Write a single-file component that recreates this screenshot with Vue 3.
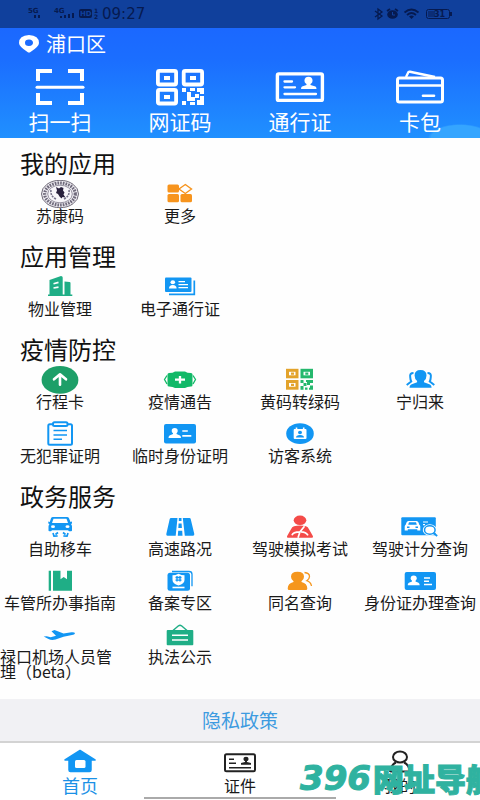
<script setup>
import { ref } from 'vue'

const quick = [
  {
    name: '扫一扫',
    icon: '<g fill="none" stroke="#fff" stroke-width="4"><path d="M8 14V4H22M38 4H52V14M8 26V36H22M38 36H52V26"/><path d="M7 20.300H53" stroke-width="3" stroke-linecap="round"/></g>'
  },
  {
    name: '网证码',
    icon: '<g fill="none" stroke="#fff" stroke-width="3.800"><rect x="7.900" y="3.900" width="18.200" height="13.600" rx="1.500"/><rect x="33.700" y="3.900" width="18.400" height="13.600" rx="1.500"/><rect x="7.900" y="22.900" width="18.200" height="13.600" rx="1.500"/></g><path fill="#fff" d="M14 9h6v4h-6zM40 9h6v4h-6zM14 28h6v4h-6zM32 21h4v4h-4zM37 25h4v5h4v4h-8zM40 21h5v3h-5zM47 21h7v6h-4v-2h-3zM45 27h4v4h-4zM50 29h4v9h-7v-5h3zM32 34h4v4h-4zM40 35h5v3h-5z"/>'
  },
  {
    name: '通行证',
    icon: '<rect x="7.400" y="6.900" width="45" height="26.500" rx="1.500" fill="none" stroke="#fff" stroke-width="3.400"/><path d="M14.500 14.500H22M14.500 20.300H25M14.500 27H46" stroke="#fff" stroke-width="2.300" stroke-linecap="round"/><ellipse cx="38.500" cy="13.500" rx="4" ry="3.800" fill="#fff"/><path fill="#fff" d="M36.500 15h4v3l5 1.500q1 .5 1 2.500H31q0-2 1-2.500l4.500-1.500z"/>'
  },
  {
    name: '卡包',
    icon: '<g fill="none" stroke="#fff" stroke-width="3"><rect x="7.500" y="11" width="45" height="24" rx="2"/><path d="M7 18.500H53" stroke-width="2.600"/><path d="M16 10L18.500 5Q19 4.500 20 4.700L45 10" stroke-width="2.400"/><path d="M33 28.800H44" stroke-width="2.600" stroke-linecap="round"/></g>'
  }
]

const B = '#1296f3'
const G = '#1fae86'

const sections = [
  {
    title: '我的应用',
    items: [
      {
        name: '苏康码',
        icon: '<ellipse cx="20" cy="14" rx="18.500" ry="13.700" fill="#f1eff4" stroke="#706b78" stroke-width="1"/><ellipse cx="20" cy="14" rx="15.300" ry="11" fill="none" stroke="#706b7c" stroke-width="3.200" stroke-dasharray="1.700 1"/><ellipse cx="20" cy="14" rx="12.300" ry="8.800" fill="#f8f6fa" stroke="#7d7889" stroke-width=".8"/><path d="M11 10q-1 6 5 9M29 10q1 6-5 9" fill="none" stroke="#77738a" stroke-width="1.600" stroke-dasharray="2 1"/><path fill="#29213d" d="M16 7l3 1.500 2-1.500 2.500 1-.5 2.500 1.500 2-1 2 2 3-3-.5-1 1.500-2-2-1.500-2.500-2-1 1-2.500z"/>'
      },
      {
        name: '更多',
        icon: '<g fill="#f7941d"><rect x="7.500" y="4.500" width="11.500" height="8" rx="1.500"/><rect x="7.500" y="14" width="11.500" height="8.300" rx="1.500"/><rect x="20.500" y="14" width="11.500" height="8.300" rx="1.500"/></g><path d="M25.300 4.500L31.500 9l-6.200 4.500L19 9z" fill="none" stroke="#f7941d" stroke-width="1.400"/>'
      }
    ]
  },
  {
    title: '应用管理',
    items: [
      {
        name: '物业管理',
        icon: `<path fill="${G}" d="M8 21.500h1.500V7l11.500-4q1.700 0 1.700 1.500v17h1.800V8.500l5 .5q1 .2 1 1v11.500H32.300V23H8z"/><path d="M13.500 10.700l5-1.300M13.500 15l5-.8" stroke="#fff" stroke-width="1.700"/>`
      },
      {
        name: '电子通行证',
        icon: `<rect x="5" y="4.500" width="26.500" height="14.500" rx="1" fill="${B}"/><path d="M34.300 7.500V21.300H9" fill="none" stroke="${B}" stroke-width="1.700"/><ellipse cx="12.800" cy="9.300" rx="2.300" ry="2" fill="#fff"/><path fill="#fff" d="M9 15.500q0-3.500 3.800-3.500t3.800 3.500z"/><path d="M18.500 8.700H25M18.500 11.700H28M18.500 14.700H28" stroke="#fff" stroke-width="1.200"/>`
      }
    ]
  },
  {
    title: '疫情防控',
    items: [
      {
        name: '行程卡',
        icon: '<ellipse cx="20" cy="13.900" rx="18.400" ry="13.900" fill="#1d9f68"/><path d="M20 18.800V9.500M14 13.300l6-5 6 5" fill="none" stroke="#fff" stroke-width="2.600" stroke-linejoin="round" stroke-linecap="round"/>'
      },
      {
        name: '疫情通告',
        icon: '<path fill="#12b968" d="M9 7q4 0 6-1.500h10Q27 7 31 7q1.500 0 1.500 1.500v10.500q0 1.500-1.500 1.500-4 0-6 1.500H15q-2-1.500-6-1.500-1.500 0-1.500-1.500V8.500Q7.500 7 9 7z"/><path d="M7 9.500l-2.500 4L7 18M33 9.500l2.500 4L33 18" fill="none" stroke="#12b968" stroke-width="1.300"/><path d="M20 10v7.500M15 13.700h10" stroke="#fff" stroke-width="2.300"/>'
      },
      {
        name: '黄码转绿码',
        icon: '<g fill="none" stroke-width="3"><rect x="7.500" y="4.300" width="9.500" height="6.500" stroke="#e3a32b"/><rect x="7.500" y="15.500" width="9.500" height="6.700" stroke="#e3a32b"/><rect x="22" y="4.300" width="9.500" height="6.500" stroke="#25b86d"/></g><path fill="#e3a32b" d="M11 6.500h3v2.200h-3zM11 17.700h3V20h-3z"/><path fill="#25b86d" d="M25.300 6.500h3v2.200h-3zM20.500 14h3v3h-3zM23.500 17h3v3h-3zM26 14h7v3h-3v2h-3v-3h-1zM30 19.500h3v4.200h-4v-2h1zM20.500 20h3v3.700h-3zM25 21.500h2.500v2.200H25z"/>'
      },
      {
        name: '宁归来',
        icon: `<path fill="${B}" d="M20.500 4q6 0 6 5.500 0 3.500-2.500 5.500v1.200l6 2.300q1.600.8 1.600 3.200H9.500q0-2.400 1.600-3.200l6-2.300V15q-2.500-2-2.500-5.500Q14.600 4 20.500 4z"/><path d="M13.500 7q-4 0-3.300 4 .2 3 1 4.500l-4.500 3.500M27.500 7q4 0 3.300 4-.2 3-1 4.500l4.500 3.500" fill="none" stroke="${B}" stroke-width="2"/>`
      },
      {
        name: '无犯罪证明',
        icon: `<g fill="none" stroke="${B}" stroke-width="2"><rect x="8.300" y="4.200" width="23.700" height="20.600" rx="1.500"/><rect x="13" y="2.300" width="14.500" height="3.700" rx="1.500" fill="#fff"/><path d="M13.500 10.600H27M13.500 14.900H27M13.500 19.200H22" stroke-width="1.500"/></g>`
      },
      {
        name: '临时身份证明',
        icon: `<rect x="4" y="4" width="32" height="19.400" rx="2" fill="${B}"/><ellipse cx="14.700" cy="10.800" rx="3" ry="2.800" fill="#fff"/><path fill="#fff" d="M13 12h3.500v2l3.500 1.500q1 .6 1 2.500H8.500q0-2 1-2.500L13 14z"/><path d="M22.300 11h5.500M22.300 15.800h9" stroke="#fff" stroke-width="1.700"/>`
      },
      {
        name: '访客系统',
        icon: `<ellipse cx="20" cy="13.700" rx="13.800" ry="10.400" fill="${B}"/><rect x="13.700" y="9" width="12.800" height="10" rx="1" fill="#fff"/><path d="M16.500 7.500v2.500M23.700 7.500v2.500" stroke="#fff" stroke-width="1.600"/><ellipse cx="20" cy="12.500" rx="2" ry="1.700" fill="${B}"/><path fill="${B}" d="M16 17.500q0-2.500 4-2.500t4 2.500z"/>`
      }
    ]
  },
  {
    title: '政务服务',
    items: [
      {
        name: '自助移车',
        icon: `<path fill="${B}" d="M13 4h14q1.500 0 2 1.300L30.500 9l1.500-.5v2l-1 .5q1 1 1 2.500v4q0 .8-1 .8h-2l-1-1H12l-1 1H9.500q-1 0-1-.8v-4q0-1.500 1-2.500l-1.200-.5v-2l1.500.5L11 5.300Q11.500 4 13 4z"/><path fill="#fff" d="M13.500 5.800h13L28 10H12z"/><ellipse cx="13" cy="13.700" rx="2" ry="1.400" fill="#fff"/><ellipse cx="27.500" cy="13.700" rx="2" ry="1.400" fill="#fff"/><path d="M18 19.500l-2.500 2M13 20l1 3.200 3.700-.2M23 19.500l2.500 2M28 20l-1 3.200-3.700-.2" fill="none" stroke="${B}" stroke-width="1.700"/>`
      },
      {
        name: '高速路况',
        icon: `<path fill="${B}" d="M11 5h6.500l-1.800 17.700H7.500Q6 22.700 6.300 21L9.700 6Q10 5 11 5zM22.800 5H29.500q1 0 1.200 1l3.600 15q.2 1.700-1.300 1.700h-8.200zM18.800 5h2.700v3h-2.700zM18.600 10.500h3l.3 4.500h-3.600zM18.200 17.700h4l.3 5h-4.700z"/>`
      },
      {
        name: '驾驶模拟考试',
        icon: '<g fill="#f44b48"><ellipse cx="20" cy="7.300" rx="6.300" ry="4.800"/><path d="M14 13.300q6-1.500 12 0 2 .5 3 3l4 7q.3 1.500-1.300 1.500H8.300Q6.500 24.800 7 23.300l4-7q1-2.500 3-3z"/></g><path d="M24.500 13.300L20 18.800q-7 0-8 3.500M21 18.800q5 0 7 3.500M20 18.800l-2 6" fill="none" stroke="#fff" stroke-width="1.700"/>'
      },
      {
        name: '驾驶计分查询',
        icon: `<rect x="1.300" y="4.300" width="34.500" height="18" rx="1" fill="${B}"/><path fill="#fff" d="M8.500 8h8q1.500 0 2 1.500l.8 2.300q1 .5 1 1.700v4h-3v-1.300H7.800v1.300H4.700v-4q0-1.200 1-1.700l.8-2.300Q7 8 8.500 8z"/><path fill="${B}" d="M9 9.300h7l.8 2.500H8.200zM7 13.500h2.500V15H7zM15.500 13.500H18V15h-2.500z"/><path d="M23 9h5M23 11.700h2" stroke="#fff" stroke-width="1.200"/><ellipse cx="29.800" cy="17" rx="7" ry="5.800" fill="#fff"/><ellipse cx="29.800" cy="17" rx="5.300" ry="4.200" fill="#fff" stroke="${B}" stroke-width="1.500"/><path d="M33.500 20l3.700 3" stroke="${B}" stroke-width="1.800"/>`
      },
      {
        name: '车管所办事指南',
        icon: `<path fill="${G}" d="M8.700 3.700H11v20H8.700zM13 3.700h7.500v8.600l3.200-2.200 3.300 2.200V3.700h5v20H13z"/>`
      },
      {
        name: '备案专区',
        icon: `<path d="M12 4.500h17q3 0 3 2.700v12" fill="none" stroke="${B}" stroke-width="1.300"/><rect x="7.500" y="5.800" width="22.500" height="18" rx="2.500" fill="${B}"/><path fill="#fff" d="M18.500 6.800q3 1.500 6 1.500v4.700q0 3.500-6 5.500-6-2-6-5.500V8.300q3 0 6-1.500z"/><path d="M15.500 10.500h6M15.500 13.200h6M17 9v5.500M20 9v5.500" stroke="${B}" stroke-width="1.300"/><path d="M12.500 20.500h12" stroke="#fff" stroke-width="1.600"/>`
      },
      {
        name: '同名查询',
        icon: '<path fill="#f5961d" d="M17.500 4.700q6.500 0 6.500 5 0 3-2.500 4.500v.8q5.800 1.300 5.800 6.500 0 1.500-1.300 1.500H9Q7.700 23 7.700 21.500q0-5.200 5.800-6.500v-.8Q11 12.700 11 9.700q0-5 6.500-5z"/><path d="M24.500 5.500q5 .5 5 4 0 2.500-2.700 4.200 4 1.300 4.700 5.300" fill="none" stroke="#f5961d" stroke-width="1.300"/>'
      },
      {
        name: '身份证办理查询',
        icon: `<rect x="4.700" y="5" width="31.300" height="18" rx="2" fill="${B}"/><ellipse cx="13.700" cy="11.300" rx="3" ry="2.700" fill="#fff"/><path fill="#fff" d="M12 12.500h3.500v2l3 1.200q1.200.6 1.200 2.600h-12q0-2 1.200-2.600l3.100-1.200z"/><path d="M24 11h6M24 14.200h5M24 17.500h8" stroke="#fff" stroke-width="1.500"/>`
      },
      {
        name: '禄口机场人员管理（beta）',
        icon: `<path fill="${B}" d="M3.700 15.500l3-.3 4 1 5.300-1.400-4.500-4.600 3-1.200 9 3.500 8-1.200q3.500-.2 3.500 1.200-.5 1-3 1.500l-8.500 1.800-8 2.700q-4 1-7-.5z"/>`
      },
      {
        name: '执法公示',
        icon: `<rect x="6.700" y="9" width="26.600" height="15.300" rx="1" fill="${G}"/><path d="M13 9.500l5.500-4.700q1.500-1 3 0L27 9.500" fill="none" stroke="${G}" stroke-width="1.500"/><path d="M12 14.300h16M12 19h16" stroke="#fff" stroke-width="1.400"/>`
      }
    ]
  }
]

const tabs = [
  {
    name: '首页',
    icon: `<path fill="${B}" stroke="${B}" stroke-width="1.500" stroke-linejoin="round" d="M20 3.500L35 13h-4v10q0 1.500-1.500 1.500H10.500Q9 24.500 9 23V13H5z"/><rect x="15" y="13" width="10.500" height="8" rx="1.500" fill="#fff"/>`
  },
  {
    name: '证件',
    icon: '<rect x="5" y="7.300" width="30" height="17" rx="1.500" fill="none" stroke="#222" stroke-width="2"/><path d="M9 12.300h5M9 16.300h7M9 20.800h22" stroke="#222" stroke-width="1.500"/><ellipse cx="26" cy="12" rx="2.600" ry="2.200" fill="#222"/><path fill="#222" d="M25 13.500h2V15l4 1v1.700H21V16l4-1z"/>'
  },
  {
    name: '我的',
    icon: '<g fill="none" stroke="#222" stroke-width="2"><ellipse cx="20" cy="10" rx="7" ry="5.500"/><path d="M16 15.500q-5 2-6 9.500M24 15.500q5 2 6 9.500M10 24.500h20"/></g>'
  }
]
const active = ref(0)
</script>

<template>
  <div class="page">
    <header class="hero">
      <div class="status">
        <div class="status-side">
          <svg class="signal" width="66" height="14" viewBox="0 0 66 14" aria-hidden="true">
            <g class="net"><text x="0" y="6">5G</text><text x="26" y="6">4G</text></g>
            <path d="M6 8h2v3H6zM10 8h2v3h-2zM32 9h2v2h-2zM36 8h2v3h-2zM40 7h2v4h-2zM44 6h2v5h-2z" />
            <rect x="51" y="2" width="13" height="9" rx="2" />
            <text class="hd" x="52" y="9">HD</text>
          </svg>
          <span class="sim"><i>1</i><i>2</i></span>
          <time>09:27</time>
        </div>
        <svg class="state" width="80" height="14" viewBox="0 0 80 14" aria-hidden="true">
          <path d="M1 4l7 5-4 3V2l4 3-7 5" fill="none" stroke="#061a50" stroke-width="1.300" />
          <ellipse cx="18.500" cy="7.500" rx="5.300" ry="4.300" />
          <path d="M13 4l3-2M24 4l-3-2" stroke="#061a50" stroke-width="1.800" />
          <path d="M18.500 5v3h2.500" fill="none" stroke="#10409c" />
          <path d="M30.500 5.500q7-6 14 0M33 8q4.500-4 9 0" fill="none" stroke="#061a50" stroke-width="1.800" />
          <path d="M35 9.500q2.500-2 5 0L37.500 12z" />
          <rect x="52.500" y="2.500" width="23" height="9" rx="2" fill="none" stroke="#061a50" />
          <path d="M76 5h2v4h-2z" />
          <path d="M54 4h7v6h-7z" opacity=".5" />
          <text x="60" y="10">31</text>
        </svg>
      </div>
      <button class="place" type="button">
        <svg width="22" height="20" viewBox="0 0 22 20" aria-hidden="true">
          <path fill="#fff" fill-rule="evenodd" d="M11 1Q21 1.500 21 9 21 12.500 12.500 18q-1.500 1-3 0Q1 12.500 1 9 1 1.500 11 1zM11 5.500Q7 5.500 7 8.800T11 12t4-3.200-4-3.300z" />
        </svg>
        <span>浦口区</span>
      </button>
      <nav class="quick">
        <a v-for="q in quick" :key="q.name" href="#">
          <svg width="60" height="40" viewBox="0 0 60 40" aria-hidden="true" v-html="q.icon"></svg>
          <span>{{ q.name }}</span>
        </a>
      </nav>
    </header>

    <main>
      <section v-for="s in sections" :key="s.title">
        <h2>{{ s.title }}</h2>
        <div class="grid">
          <a v-for="item in s.items" :key="item.name" href="#">
            <svg width="40" height="28" viewBox="0 0 40 28" aria-hidden="true" v-html="item.icon"></svg>
            <span>{{ item.name }}</span>
          </a>
        </div>
      </section>
    </main>

    <footer>
      <div class="policy"><a href="#">隐私政策</a></div>
      <nav class="tabs">
        <button
          v-for="(t, i) in tabs"
          :key="t.name"
          type="button"
          :class="{ active: i === active }"
          @click="active = i"
        >
          <svg width="40" height="28" viewBox="0 0 40 28" aria-hidden="true" v-html="t.icon"></svg>
          <span>{{ t.name }}</span>
        </button>
      </nav>
      <div class="home-bar"></div>
      <div class="site-mark"><b>396</b><span>网址导航</span></div>
    </footer>
  </div>
</template>

<style>
body {
  margin: 0;
  background: #fefefe;
}
</style>

<style scoped>
.page {
  min-height: 100vh;
  display: flex;
  flex-direction: column;
  font-family: "Noto Sans CJK SC", sans-serif;
  color: #1a1a1a;
}
a {
  color: inherit;
  text-decoration: none;
}
button {
  border: 0;
  padding: 0;
  background: none;
  font: inherit;
  color: inherit;
  cursor: pointer;
}
svg {
  display: block;
  flex: none;
}
.hero {
  background:
    radial-gradient(ellipse 32px 14px at calc(100% - 20px) 100%, #35a5ff 0 90%, transparent),
    linear-gradient(#1b68ff 28px, #1b6eff 60px, #2090ff);
  color: #fff;
  padding-bottom: 5px;
}
.status {
  height: 28px;
  display: flex;
  align-items: center;
  justify-content: space-between;
  padding: 0 26px 0 28px;
  background: #10409c;
  color: #061a50;
  fill: #061a50;
}
.status-side {
  display: flex;
  align-items: center;
}
.status text {
  font: bold 8px "DejaVu Sans", sans-serif;
}
.status .net text {
  font-size: 7px;
}
.status .hd {
  font-size: 7px;
  fill: #10409c;
}
.sim {
  display: flex;
  flex-direction: column;
  width: 8px;
  font: bold 6px/6px "DejaVu Sans", sans-serif;
}
.sim i {
  font-style: normal;
}
time {
  font: 15px/28px "DejaVu Sans", sans-serif;
}
.place {
  display: flex;
  align-items: center;
  gap: 6px;
  height: 32px;
  margin-left: 18px;
  font-size: 20px;
  line-height: 32px;
}
.quick {
  display: grid;
  grid-template-columns: repeat(4, 1fr);
  padding-top: 7px;
}
.quick a {
  display: flex;
  flex-direction: column;
  align-items: center;
  gap: 2px;
  font-size: 21px;
  line-height: 24px;
}
main {
  flex: 1;
  display: flex;
  flex-direction: column;
  gap: 12px;
  padding: 11px 0 24px;
}
h2 {
  margin: 0;
  padding-left: 20px;
  font-size: 24px;
  font-weight: 400;
  line-height: 27px;
  color: #111;
}
.grid {
  display: grid;
  grid-template-columns: repeat(4, 1fr);
  grid-auto-rows: 54px;
}
.grid a {
  display: flex;
  flex-direction: column;
  align-items: center;
  padding-top: 4px;
  font-size: 16px;
  line-height: 15px;
}
footer {
  position: relative;
  overflow: hidden;
}
.policy {
  background: #f1f1f4;
  border-bottom: 2px solid #d3d3d3;
  text-align: center;
  font-size: 19px;
  line-height: 42px;
  color: #3d9be0;
}
.tabs {
  display: grid;
  grid-template-columns: repeat(3, 1fr);
  height: 57px;
  padding: 4px 0 5px;
  box-sizing: border-box;
  background: #fff;
}
.tabs button {
  display: flex;
  flex-direction: column;
  align-items: center;
  font-size: 16px;
  line-height: 20px;
}
.tabs .active {
  font-size: 18px;
  color: #1b91e6;
}
.home-bar {
  position: absolute;
  bottom: 1px;
  left: 30%;
  right: 30%;
  height: 2px;
  background: #aaa;
}
.site-mark {
  position: absolute;
  left: calc(100% - 180px);
  bottom: 4px;
  display: flex;
  gap: 2px;
  white-space: nowrap;
  font-size: 31px;
  line-height: 36px;
  font-weight: 900;
  color: #2fb2a0;
  -webkit-text-stroke: 1px #2fb2a0;
  pointer-events: none;
}
.site-mark b {
  font: italic bold 34px/36px "DejaVu Sans", sans-serif;
}
</style>
